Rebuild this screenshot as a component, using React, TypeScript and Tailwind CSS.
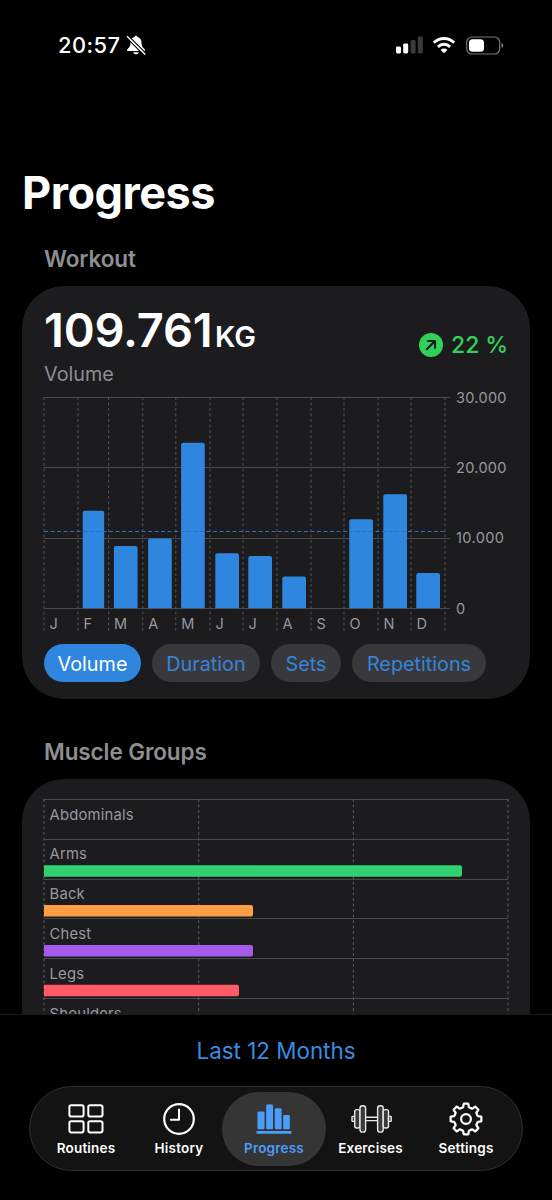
import type { ReactNode } from 'react';

const MONTHS = [
  { label: 'J', x: 44, value: 0 },
  { label: 'F', x: 78, value: 13.85 },
  { label: 'M', x: 108.6, value: 8.85 },
  { label: 'A', x: 142.8, value: 9.9 },
  { label: 'M', x: 175.8, value: 23.5 },
  { label: 'J', x: 210, value: 7.8 },
  { label: 'J', x: 243, value: 7.4 },
  { label: 'A', x: 277, value: 4.5 },
  { label: 'S', x: 311, value: 0 },
  { label: 'O', x: 344, value: 12.65 },
  { label: 'N', x: 378, value: 16.2 },
  { label: 'D', x: 411, value: 5 },
];

const MUSCLES = [
  { label: 'Abdominals', width: 0, color: '' },
  { label: 'Arms', width: 418, color: '#30d16f' },
  { label: 'Back', width: 209, color: '#ff9f45' },
  { label: 'Chest', width: 209, color: '#a65aec' },
  { label: 'Legs', width: 195, color: '#ff5a66' },
  { label: 'Shoulders', width: 0, color: '' },
];

function StatusBar() {
  return (
    <div className="flex h-[90px] items-center justify-between pr-12 pl-[58px] text-white">
      <div className="flex items-center gap-[5px]">
        <span className="w-[63px] text-[21.8px] leading-7 font-medium tracking-[0.5px] whitespace-nowrap">20:57</span>
        <svg width="20" height="20" viewBox="0 0 20 20" fill="none">
          <path d="M10 .7c-.9 0-1.5.6-1.6 1.3C5.8 2.7 4.5 4.8 4.5 7.5c0 3-.5 4-2 5.5C1.5 14 1 14.4 1 15.2c0 .6.5.9 1.1.9h15.800c.6 0 1.100-.3 1.100-.9 0-.8-.5-1.200-1.500-2.200-1.500-1.500-2-2.500-2-5.500 0-2.700-1.300-4.800-3.900-5.500C11.500 1.300 10.900.7 10 .7ZM7.300 17.200c.3 1.300 1.300 2.100 2.700 2.100s2.400-.8 2.700-2.100Z" fill="white" />
          <path d="M1 3 18 20M2.600 1.200 19.500 18" stroke="black" strokeWidth="1.300" />
          <path d="M1.500 1.800 18.800 19" stroke="white" strokeWidth="1.500" strokeLinecap="round" />
        </svg>
      </div>
      <div className="flex items-center gap-[10px]">
        <svg className="-mr-px" width="27" height="18" viewBox="0 0 27 18">
          <rect x="0" y="10.500" width="5" height="7" rx="1.400" fill="white" />
          <rect x="7.200" y="7.500" width="5" height="10" rx="1.400" fill="white" />
          <rect x="14.600" y="4" width="5" height="13.500" rx="1.400" fill="#3a3a3c" />
          <rect x="21.800" y="0.500" width="5" height="17" rx="1.400" fill="#3a3a3c" />
        </svg>
        <svg width="24" height="18" viewBox="0 0 24 18" fill="none" stroke="white" strokeWidth="3">
          <path d="M1.800 6.700a14.400 14.400 0 0 1 20.400 0" />
          <path d="M5.900 10.900a8.600 8.600 0 0 1 12.200 0" />
          <path d="M12 17.300 8.600 13.900a4.800 4.800 0 0 1 6.800 0Z" fill="white" stroke="none" />
        </svg>
        <svg width="38" height="19" viewBox="0 0 38 19">
          <rect x="0.700" y="1" width="33" height="17" rx="5.200" fill="none" stroke="#77777a" strokeWidth="1.200" />
          <rect x="3" y="3.200" width="15" height="12.600" rx="3.500" fill="white" />
          <path d="M35.500 7v5c1.200-.4 1.800-1.400 1.800-2.500S36.700 7.400 35.500 7Z" fill="#77777a" />
        </svg>
      </div>
    </div>
  );
}

function VolumeChart() {
  return (
    <svg className="block" width="508" height="252" viewBox="22 384 508 252">
      {/* Grid */}
      {[397.5, 467.5, 538.5, 608.5].map((y) => (
        <path key={y} d={`M44 ${y}H450`} stroke="#49494c" />
      ))}
      {[...MONTHS.map((m) => m.x), 445].map((x) => (
        <path key={x} d={`M${x} 397V631`} stroke="#505053" strokeDasharray="3 2.5" />
      ))}
      {/* Bars */}
      {MONTHS.filter((m) => m.value > 0).map((m, i) => {
        const height = m.value * 7.04;
        const width = m.label === 'F' ? 21.5 : 23.7;
        const left = m.x + (m.label === 'F' ? 4.7 : 5.3);
        return (
          <path
            key={i}
            d={`M${left} 608.2V${608.2 - height + 2}q0-2 2-2h${width - 4}q2 0 2 2V608.2Z`}
            fill="#2f86de"
          />
        );
      })}
      {/* Average */}
      <path d="M44 531.5H445" stroke="#2871c4" strokeDasharray="4 2.5" />
      {/* Labels */}
      <g fill="#98989f" fontSize="14.5">
        {MONTHS.map((m, i) => (
          <text key={i} x={m.x + 5.5} y="628.5">{m.label}</text>
        ))}
        <text x="456" y="402.5" textLength="50.5">30.000</text>
        <text x="456" y="472.7" textLength="50.5">20.000</text>
        <text x="456" y="543.2" textLength="48">10.000</text>
        <text x="456" y="613.7">0</text>
      </g>
    </svg>
  );
}

function MuscleChart() {
  return (
    <svg className="block" width="508" height="240" viewBox="22 798 508 240">
      {MUSCLES.map((m, i) => {
        const top = 799.5 + i * 39.8;
        return (
          <g key={m.label}>
            <path d={`M44 ${Math.floor(top) + 0.5}H508`} stroke="#49494c" />
            <text x="49.5" y={top + 20} fontSize="14.8" letterSpacing="0.2" fill="#98989f">{m.label}</text>
          </g>
        );
      })}
      {[44, 198.7, 353.4, 508].map((x) => (
        <path key={x} d={`M${x} 799V1038`} stroke="#5a5a5d" strokeDasharray="3 2.5" />
      ))}
      {MUSCLES.map((m, i) => {
        const top = 799.5 + i * 39.8;
        return m.width > 0 && (
          <path
            key={m.label}
            d={`M44 ${top + 26}h${m.width - 2}q2 0 2 2v7.5q0 2-2 2h-${m.width - 2}Z`}
            fill={m.color}
          />
        );
      })}
    </svg>
  );
}

function RoutinesIcon() {
  return (
    <svg width="36" height="32" viewBox="0 0 36 32" fill="none" stroke="white" strokeWidth="2">
      <rect x="1.400" y="2.300" width="14.200" height="11.200" rx="1.800" />
      <rect x="20.300" y="2.300" width="14.200" height="11.200" rx="1.800" />
      <rect x="1.400" y="18.200" width="14.200" height="11.200" rx="1.800" />
      <rect x="20.300" y="18.200" width="14.200" height="11.200" rx="1.800" />
    </svg>
  );
}

function HistoryIcon() {
  return (
    <svg width="34" height="34" viewBox="0 0 34 34" fill="none" stroke="white" strokeWidth="2.2">
      <circle cx="17" cy="17" r="14.800" />
      <path d="M17 7.500V17.800H8.800" strokeLinecap="round" strokeLinejoin="round" strokeWidth="2" />
    </svg>
  );
}

function ProgressIcon() {
  return (
    <svg width="36" height="32" viewBox="0 0 36 32" fill="#4a9dfa">
      <rect x="1.500" y="8.600" width="7" height="17.600" rx="0.900" />
      <rect x="10.200" y="1.600" width="6.800" height="24.600" rx="0.900" />
      <rect x="18.800" y="5.200" width="6.800" height="21" rx="0.900" />
      <rect x="27.200" y="12" width="6.600" height="14.200" rx="0.900" />
      <rect x="0.500" y="28" width="35" height="2.700" rx="0.600" />
    </svg>
  );
}

function ExercisesIcon() {
  return (
    <svg width="44" height="32" viewBox="0 0 44 32" fill="#3a3a3a" stroke="#e8e8e8" strokeWidth="1.4">
      <rect x="3" y="13.400" width="2.700" height="5" rx="0.600" />
      <rect x="5.700" y="6.600" width="5.300" height="18.400" rx="2" />
      <rect x="11" y="2.700" width="5.600" height="26.400" rx="2.400" />
      <path d="M16.600 14.200h12M16.600 17.600h12" />
      <rect x="28.600" y="2.700" width="5.600" height="26.400" rx="2.400" />
      <rect x="34.200" y="6.600" width="5.300" height="18.400" rx="2" />
      <rect x="39.500" y="13.400" width="2.700" height="5" rx="0.600" />
    </svg>
  );
}

// Eight teeth, 45 degrees apart, joined by rounded valleys
function gearPath() {
  const at = (deg: number, r: number) => {
    const a = (deg * Math.PI) / 180;
    return `${(17 + r * Math.sin(a)).toFixed(2)} ${(17 - r * Math.cos(a)).toFixed(2)}`;
  };
  let d = `M${at(-8, 15.5)}`;
  for (let i = 0; i < 8; i++) {
    const c = i * 45;
    d += `L${at(c + 8, 15.5)}Q${at(c + 10.5, 15)} ${at(c + 11, 13.6)}`;
    d += `Q${at(c + 13, 11.4)} ${at(c + 22.5, 12)}Q${at(c + 32, 11.4)} ${at(c + 34, 13.6)}`;
    d += `Q${at(c + 34.5, 15)} ${at(c + 37, 15.5)}`;
  }
  return d + 'Z';
}

function SettingsIcon() {
  return (
    <svg width="34" height="34" viewBox="0 0 34 34" fill="none" stroke="white" strokeWidth="2.2" strokeLinejoin="round">
      <path d={gearPath()} />
      <circle cx="17" cy="17" r="4.900" />
    </svg>
  );
}

function Tab({ icon, label, className }: { icon: ReactNode; label: string; className: string }) {
  return (
    <div className={`flex h-[74px] flex-col items-center pt-[7px] ${className}`}>
      <div className="flex h-10 items-center">{icon}</div>
      <span className="mt-px text-[13.5px] leading-[17px] font-semibold tracking-[0.2px]">{label}</span>
    </div>
  );
}

function Chip({ label, className }: { label: string; className: string }) {
  return (
    <button className={`h-[38px] rounded-full pt-[3px] text-center text-[19.8px] leading-[35px] whitespace-nowrap ${className}`}>
      {label}
    </button>
  );
}

export default function App() {
  return (
    <div className="flex h-[1200px] w-[552px] flex-col overflow-hidden bg-black font-['Inter',sans-serif]">
      <StatusBar />

      {/* Scroll content */}
      <main className="h-[924px] shrink-0 overflow-hidden px-[22px]">
        <h1 className="mt-[76px] text-[45px] leading-[54px] font-bold tracking-[-0.5px] text-white">Progress</h1>
        <h2 className="mt-[24px] pl-[22px] text-[22.5px] leading-[30px] font-semibold tracking-[-0.1px] text-[#8e8e93]">Workout</h2>

        <section className="mt-3 h-[413px] rounded-[42px] bg-[#1c1c1e]">
          <div className="flex h-[98px] justify-between px-[22px]">
            <div className="pt-[19px]">
              <div className="flex h-[50px] items-baseline whitespace-nowrap text-white">
                <span className="w-[171px] text-[47px] leading-[50px] font-semibold tracking-[-0.2px]">109.761</span>
                <span className="text-[29px] leading-[50px] font-semibold">KG</span>
              </div>
              <div className="mt-[5px] text-[19.8px] leading-7 text-[#8e8e93]">Volume</div>
            </div>
            <div className="mt-[43px] flex h-8 items-center gap-2 text-[#30d158]">
              <svg width="24" height="24" viewBox="0 0 24 24">
                <circle cx="12" cy="12" r="12" fill="#30d158" />
                <path d="M7.800 16.200 15.700 8.300M9 8h7v7" fill="none" stroke="#1c1c1e" strokeWidth="2.100" strokeLinecap="round" strokeLinejoin="round" />
              </svg>
              <span className="text-[23px] font-medium tracking-[-0.1px] whitespace-nowrap">22 %</span>
            </div>
          </div>
          <VolumeChart />
          <div className="mt-2 flex gap-[11px] pl-[22px]">
            <Chip label="Volume" className="w-[97px] bg-[#2f86de] text-white" />
            <Chip label="Duration" className="w-[108px] bg-[#39393d] text-[#3586d8]" />
            <Chip label="Sets" className="w-[70px] bg-[#39393d] text-[#3586d8]" />
            <Chip label="Repetitions" className="w-[134px] bg-[#39393d] text-[#3586d8]" />
          </div>
        </section>

        <h2 className="mt-[38px] pl-[22px] text-[22.5px] leading-[30px] font-semibold tracking-[-0.1px] text-[#8e8e93]">Muscle Groups</h2>
        <section className="mt-3 h-[300px] rounded-[42px] bg-[#1c1c1e] pt-[19px]">
          <MuscleChart />
        </section>
      </main>

      {/* Period picker and tab bar */}
      <footer className="flex flex-1 flex-col items-center border-t border-[#1c1c1e] bg-black">
        <button className="mt-5 text-[22.4px] leading-8 text-[#3a8be0]">Last 12 Months</button>
        <nav className="mt-[19px] flex h-[85px] w-[494px] items-center rounded-full border border-[#303031] bg-[#131313] pl-1.5 text-white">
          <Tab icon={<RoutinesIcon />} label="Routines" className="w-[100px]" />
          <Tab icon={<HistoryIcon />} label="History" className="w-[86px]" />
          <Tab icon={<ProgressIcon />} label="Progress" className="w-[104px] rounded-full bg-[#353536] text-[#4a9dfa]" />
          <Tab icon={<ExercisesIcon />} label="Exercises" className="w-[89px]" />
          <Tab icon={<SettingsIcon />} label="Settings" className="w-[102px]" />
        </nav>
      </footer>
    </div>
  );
}
